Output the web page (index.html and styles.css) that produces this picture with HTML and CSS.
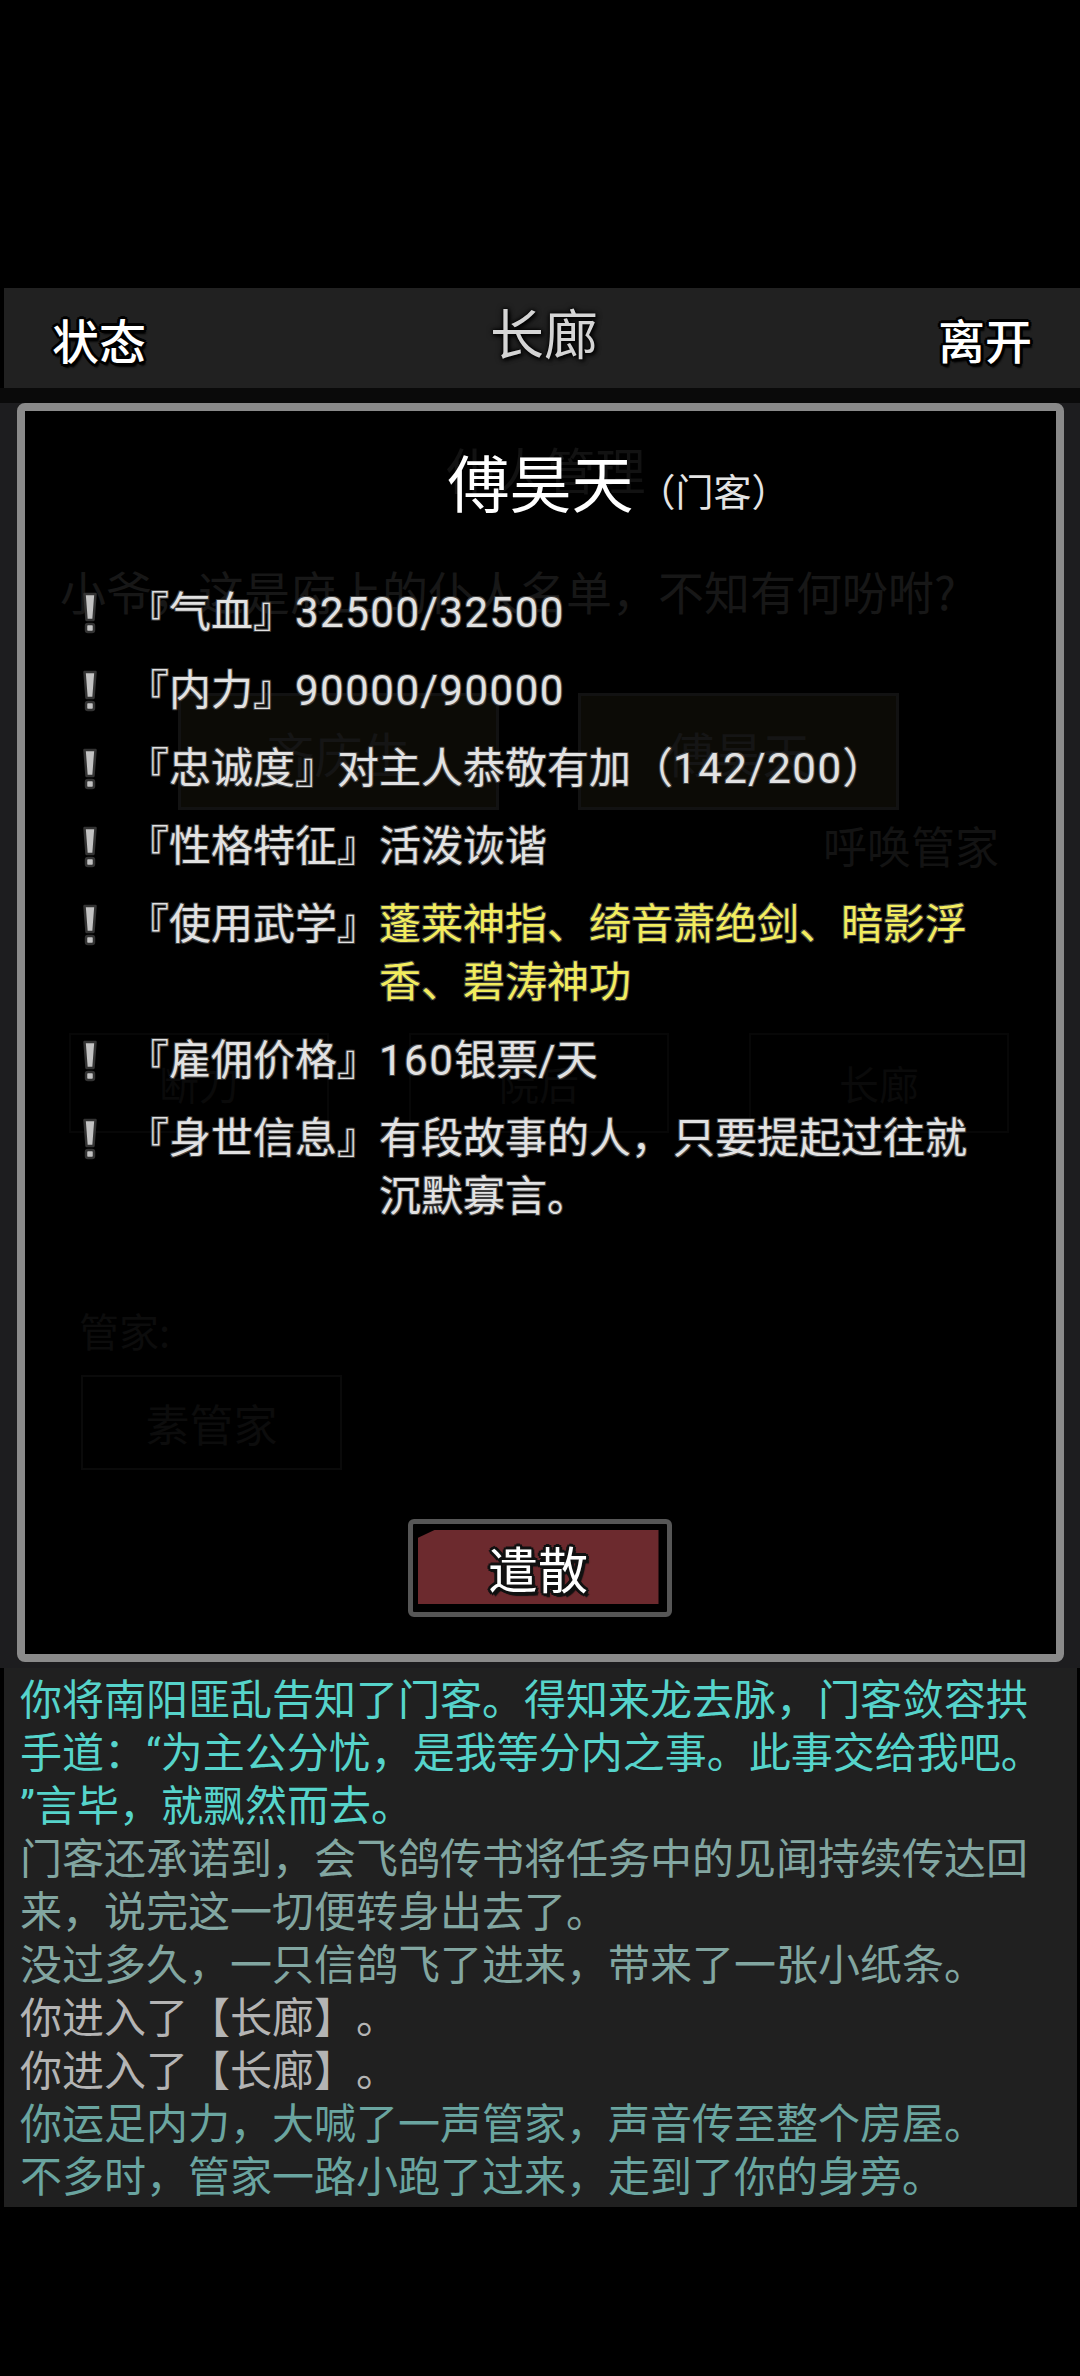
FILE: index.html
```html
<!DOCTYPE html>
<html lang="zh-CN">
<head>
  <meta charset="UTF-8" />
  <title>长廊</title>
  <link rel="stylesheet" href="styles.css">
</head>
<body>
  <div class="statusbar"></div>

  <header class="topbar">
    <span class="side">状态</span>
    <span class="place">长廊</span>
    <span class="side">离开</span>
  </header>

  <main class="stage">
    <section class="dialog">
      <!-- the servant list underneath, seen through the sheet -->
      <div class="ghost">
        <div class="ghost-title">仆人管理</div>
        <div class="ghost-line">小爷，这是府上的仆人名单，不知有何吩咐?</div>
        <div class="ghost-btns">
          <div class="ghost-btn first">齐庆生</div>
          <div class="ghost-btn second">傅昊天</div>
        </div>
        <div class="ghost-call">呼唤管家</div>
        <div class="ghost-grid">
          <div class="ghost-cell">断刀</div>
          <div class="ghost-cell">院后</div>
          <div class="ghost-cell">长廊</div>
        </div>
        <div class="ghost-sub">管家:</div>
        <div class="ghost-box">素管家</div>
      </div>

      <div class="sheet">
        <div class="name-line">
          <span></span>
          <h1>傅昊天</h1>
          <span class="role">（门客）</span>
        </div>

        <ul class="attrs">
          <li>
            <span class="mark"><svg viewBox="0 0 16 44" width="16" height="44"><path d="M2.5 3h11l-2 26h-7z"/><rect x="4" y="33" width="8" height="8" rx="2"/></svg></span>
            <span class="label">『气血』</span>
            <span class="value"><span class="num">32500/32500</span></span>
          </li>
          <li>
            <span class="mark"><svg viewBox="0 0 16 44" width="16" height="44"><path d="M2.5 3h11l-2 26h-7z"/><rect x="4" y="33" width="8" height="8" rx="2"/></svg></span>
            <span class="label">『内力』</span>
            <span class="value"><span class="num">90000/90000</span></span>
          </li>
          <li>
            <span class="mark"><svg viewBox="0 0 16 44" width="16" height="44"><path d="M2.5 3h11l-2 26h-7z"/><rect x="4" y="33" width="8" height="8" rx="2"/></svg></span>
            <span class="label">『忠诚度』</span>
            <span class="value">对主人恭敬有加（<span class="num">142/200</span>）</span>
          </li>
          <li>
            <span class="mark"><svg viewBox="0 0 16 44" width="16" height="44"><path d="M2.5 3h11l-2 26h-7z"/><rect x="4" y="33" width="8" height="8" rx="2"/></svg></span>
            <span class="label">『性格特征』</span>
            <span class="value">活泼诙谐</span>
          </li>
          <li>
            <span class="mark"><svg viewBox="0 0 16 44" width="16" height="44"><path d="M2.5 3h11l-2 26h-7z"/><rect x="4" y="33" width="8" height="8" rx="2"/></svg></span>
            <span class="label">『使用武学』</span>
            <span class="value skill">蓬莱神指、绮音萧绝剑、暗影浮香、碧涛神功</span>
          </li>
          <li>
            <span class="mark"><svg viewBox="0 0 16 44" width="16" height="44"><path d="M2.5 3h11l-2 26h-7z"/><rect x="4" y="33" width="8" height="8" rx="2"/></svg></span>
            <span class="label">『雇佣价格』</span>
            <span class="value"><span class="num">160</span>银票/天</span>
          </li>
          <li>
            <span class="mark"><svg viewBox="0 0 16 44" width="16" height="44"><path d="M2.5 3h11l-2 26h-7z"/><rect x="4" y="33" width="8" height="8" rx="2"/></svg></span>
            <span class="label">『身世信息』</span>
            <span class="value">有段故事的人，只要提起过往就沉默寡言。</span>
          </li>
        </ul>

        <div class="actions">
          <button class="dismiss"><span>遣散</span></button>
        </div>
      </div>
    </section>
  </main>

  <section class="log">
    <p class="cyan">你将南阳匪乱告知了门客。得知来龙去脉，门客敛容拱手道：“为主公分忧，是我等分内之事。此事交给我吧。<br>”言毕，就飘然而去。</p>
    <p class="dim">门客还承诺到，会飞鸽传书将任务中的见闻持续传达回来，说完这一切便转身出去了。</p>
    <p class="dim">没过多久，一只信鸽飞了进来，带来了一张小纸条。</p>
    <p class="grey">你进入了【长廊】。</p>
    <p class="grey">你进入了【长廊】。</p>
    <p class="teal">你运足内力，大喊了一声管家，声音传至整个房屋。</p>
    <p class="teal">不多时，管家一路小跑了过来，走到了你的身旁。</p>
  </section>
</body>
</html>
```

FILE: styles.css
```css
body {
  margin: 0;
  width: 1080px;
  height: 2376px;
  background: #000;
  font-family: Roboto, "Noto Sans CJK SC", sans-serif;
  color: #e0e0e0;
  overflow: hidden;
  text-spacing-trim: space-all;
}

.statusbar {
  height: 288px;
}

/* top bar */
.topbar {
  height: 100px;
  margin-left: 4px;
  background: #212121;
  display: flex;
  align-items: center;
  justify-content: space-between;
  padding: 0 48px 0 48px;
  box-sizing: border-box;
}

.topbar .side {
  font-family: "Noto Sans CJK SC", sans-serif;
  font-size: 47px;
  font-weight: 500;
  color: #fff;
  line-height: 1;
  text-shadow: 3px 0 0 #000, -3px 0 0 #000, 0 3px 0 #000, 0 -3px 0 #000,
    2px 2px 0 #000, -2px 2px 0 #000, 2px -2px 0 #000, -2px -2px 0 #000, 2px 4px 2px #000;
}

.topbar .place {
  font-family: "Noto Sans CJK SC", sans-serif;
  font-size: 54px;
  font-weight: 400;
  color: #d4d4d4;
  line-height: 1;
  margin-top: -12px;
  margin-left: 4px;
  text-shadow: 0 0 3px #000, 0 0 6px #000, 2px 2px 4px #000;
}

/* overlay area */
.stage {
  height: 1280px;
  box-sizing: border-box;
  padding: 15px 16px 6px 17px;
  background: linear-gradient(to bottom, #0a0a0a 0, #0a0a0a 15px, #1d1d1f 15px);
}

.dialog {
  height: 1259px;
  box-sizing: border-box;
  border: 8px solid #8a8a8a;
  border-radius: 8px;
  background: #000;
  display: grid;
}

.ghost, .sheet {
  grid-area: 1 / 1;
}

/* faint page under the sheet */
.ghost {
  color: #151515;
  font-family: "Noto Sans CJK SC", sans-serif;
  line-height: 60px;
}

.ghost-title {
  margin-top: 27px;
  text-align: center;
  font-size: 50px;
  padding-left: 10px;
  color: #121212;
}

.ghost-line {
  margin-top: 62px;
  padding-left: 35px;
  font-size: 46px;
  color: #171717;
}

.ghost-btns {
  margin-top: 73px;
  display: flex;
  gap: 79px;
  padding-left: 153px;
}

.ghost-btn {
  width: 321px;
  height: 117px;
  box-sizing: border-box;
  border: 3px solid #121212;
  background: #0c0b06;
  display: flex;
  align-items: center;
  justify-content: center;
  font-size: 48px;
  color: #151515;
}

.ghost-call {
  margin-top: 7px;
  padding-left: 798px;
  font-size: 44px;
  line-height: 56px;
  color: #131313;
}

.ghost-grid {
  margin-top: 160px;
  margin-left: 44px;
  display: flex;
  gap: 80px;
}

.ghost-cell {
  width: 260px;
  height: 100px;
  box-sizing: border-box;
  border: 2px solid #070707;
  display: flex;
  align-items: center;
  justify-content: center;
  font-size: 40px;
  color: #0a0a0a;
}

.ghost-sub {
  margin-top: 172px;
  padding-left: 54px;
  font-size: 40px;
  line-height: 50px;
  color: #0c0c0c;
}

.ghost-box {
  margin-top: 20px;
  margin-left: 56px;
  width: 261px;
  height: 95px;
  box-sizing: border-box;
  border: 2px solid #0a0a0a;
  display: flex;
  align-items: center;
  justify-content: center;
  font-size: 44px;
  color: #0c0c0c;
}

/* the info sheet */
.sheet {
  display: flex;
  flex-direction: column;
  padding: 39px 66px 37px 45px;
}

.name-line {
  display: grid;
  grid-template-columns: 1fr auto 1fr;
  align-items: end;
  margin-left: -45px;
  margin-right: -66px;
}

.name-line h1 {
  margin: 0;
  font-family: "Noto Sans CJK SC", sans-serif;
  font-size: 62px;
  font-weight: 400;
  line-height: 62px;
  color: #fff;
}

.role {
  font-family: "Noto Sans CJK SC", sans-serif;
  font-size: 38px;
  line-height: 38px;
  color: #e4e4e4;
  margin-left: 4px;
  padding-bottom: 3px;
}

.attrs {
  list-style: none;
  margin: 72px 0 0 0;
  padding: 0;
  display: flex;
  flex-direction: column;
  gap: 20px;
}

.attrs li {
  display: flex;
  align-items: flex-start;
  font-size: 42px;
  line-height: 58px;
  color: #e2e2e2;
  text-shadow: 1px 1px 0 #3c3c3c, -1px -1px 0 #3c3c3c, 1px -1px 0 #3c3c3c, -1px 1px 0 #3c3c3c;
}

.mark {
  width: 40px;
  height: 58px;
  margin-right: 17px;
  display: flex;
  align-items: center;
  justify-content: center;
}

.mark svg {
  fill: #c2c2c2;
  stroke: #333;
  stroke-width: 2.5;
  stroke-linejoin: round;
}

.label {
  white-space: nowrap;
}

.value {
  flex: 1;
}

.num {
  letter-spacing: 1.5px;
}

.value.skill {
  color: #f2ec5e;
}

.actions {
  margin-top: auto;
  display: flex;
  justify-content: center;
  margin-right: -21px;
}

.dismiss {
  width: 264px;
  height: 98px;
  box-sizing: border-box;
  border: 5px solid #565656;
  border-radius: 6px;
  background: #000;
  padding: 6px 8px 8px 5px;
  margin-left: -2px;
  display: flex;
  cursor: pointer;
}

.dismiss span {
  flex: 1;
  display: flex;
  align-items: center;
  justify-content: center;
  background: #6c2a2e;
  clip-path: polygon(17px 0, 100% 0, 100% 100%, 0 100%, 0 8px);
  font-family: "Noto Sans CJK SC", sans-serif;
  font-size: 50px;
  font-weight: 400;
  color: #fff;
  text-shadow: 3px 0 0 #111, -3px 0 0 #111, 0 3px 0 #111, 0 -3px 0 #111,
    2px 2px 0 #111, -2px 2px 0 #111, 2px -2px 0 #111, -2px -2px 0 #111, 3px 4px 1px #111;
}

/* message log */
.log {
  height: 539px;
  box-sizing: border-box;
  margin: 0 3px 0 4px;
  background: #202020;
  padding: 6px 20px 3px 16px;
  font-size: 42px;
  line-height: 53px;
}

.log p {
  margin: 0;
}

.log .cyan {
  color: #56d4cb;
}

.log .dim {
  color: #82a6a1;
}

.log .grey {
  color: #b4b4b4;
}

.log .teal {
  color: #6aa5a0;
}
```
